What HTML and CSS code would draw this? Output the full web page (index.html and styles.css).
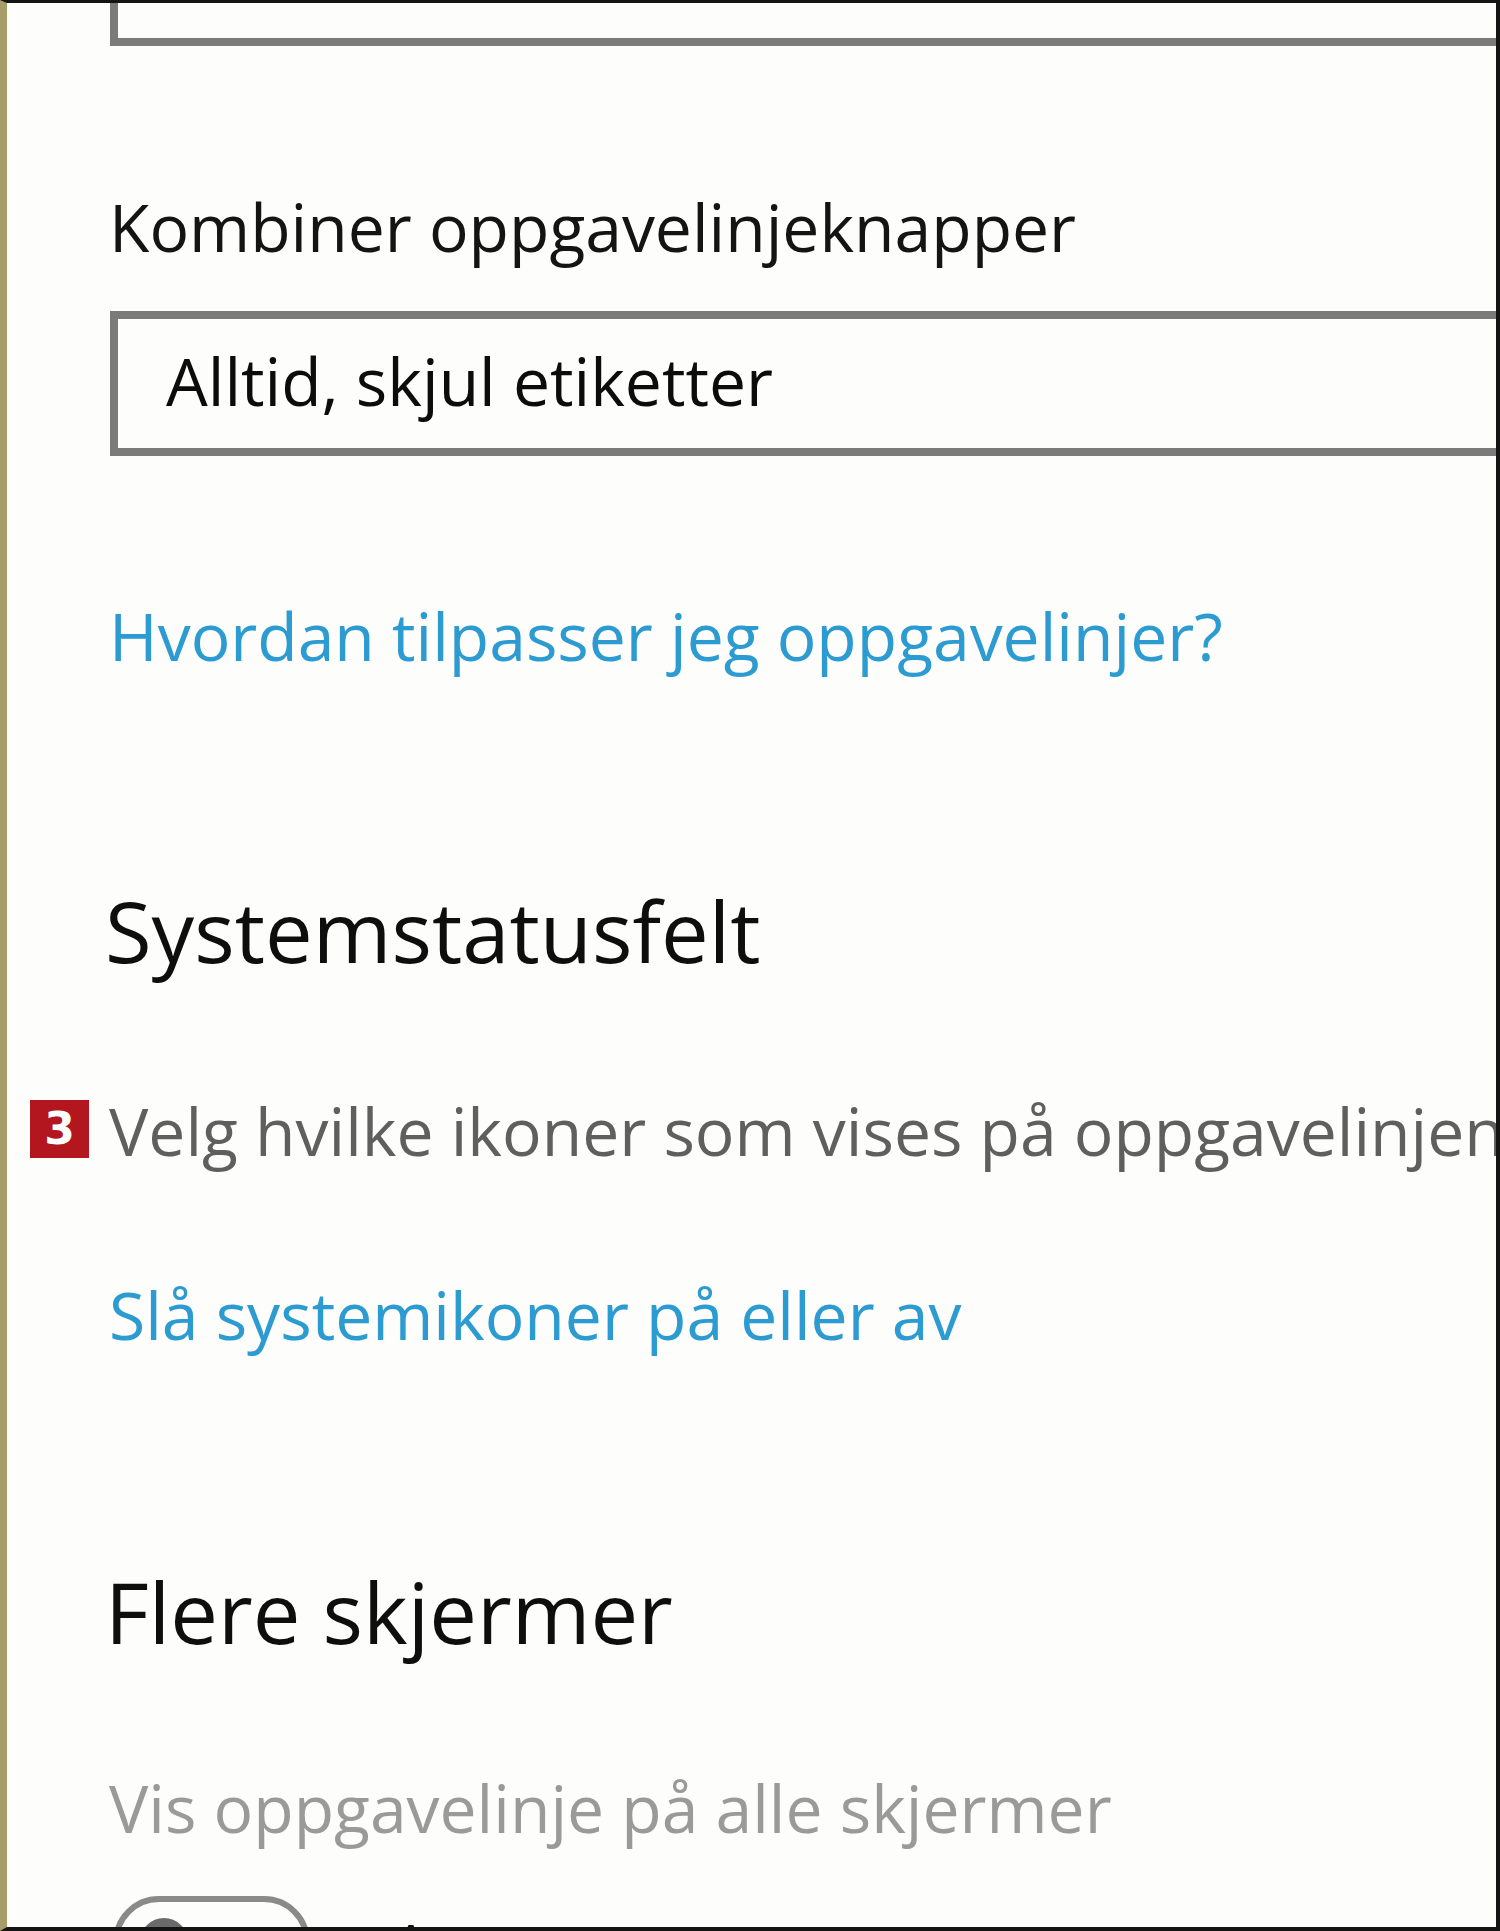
FILE: index.html
```html
<!DOCTYPE html>
<html lang="nb">
<head>
  <meta charset="UTF-8" />
  <title>Oppgavelinje</title>
  <link rel="stylesheet" href="styles.css">
</head>
<body>

<div class="window">
  <div class="page">

    <!-- previous dropdown, scrolled out of view -->
    <div class="dropdown dropdown-cut"></div>

    <div class="field-label">Kombiner oppgavelinjeknapper</div>
    <div class="dropdown">Alltid, skjul etiketter</div>

    <a class="link help-link" href="#">Hvordan tilpasser jeg oppgavelinjer?</a>

    <h2 class="section-title tray-title">Systemstatusfelt</h2>

    <div class="annotated">
      <span class="badge">3</span>
      <a class="muted-link" href="#">Velg hvilke ikoner som vises på oppgavelinjen</a>
    </div>

    <a class="link icons-link" href="#">Slå systemikoner på eller av</a>

    <h2 class="section-title screens-title">Flere skjermer</h2>

    <div class="setting-label">Vis oppgavelinje på alle skjermer</div>

    <div class="toggle-row">
      <span class="toggle"><span class="knob"></span></span>
      <span class="toggle-state">Av</span>
    </div>

  </div>
</div>

</body>
</html>
```

FILE: styles.css
```css
html, body {
  margin: 0;
  padding: 0;
}
body {
  background: #fdfdfb;
  font-family: 'Open Sans', 'Noto Sans', sans-serif;
  color: #111;
}
.window {
  width: 1500px;
  height: 1931px;
  box-sizing: border-box;
  border-top: 3px solid #141414;
  border-right: 4px solid #141414;
  border-bottom: 4px solid #141414;
  border-left: 7px solid #a89d68;
  background: #fdfdfb;
  overflow: hidden;
}
.page {
  padding-left: 102px;
  font-size: 66px;
  line-height: 80px;
}

/* dropdowns */
.dropdown {
  margin-left: 1px;
  width: 1500px;
  border: 8px solid #7b7b7b;
  padding: 21px 0 28px 48px;
  height: 80px;
  color: #0c0c0c;
}
.dropdown-cut {
  border-top: none;
  height: 35px;
  padding: 0;
}

.field-label {
  margin-top: 140px;
  margin-bottom: 45px;
  color: #141414;
}

/* links */
.link {
  display: block;
  color: #2b9bd1;
  text-decoration: none;
  white-space: nowrap;
}
.help-link {
  margin-top: 139px;
}
.icons-link {
  margin-top: 104px;
}

.section-title {
  margin: 0 0 0 -4px;
  font-size: 85px;
  line-height: 100px;
  font-weight: normal;
  color: #0e0e0e;
}
.tray-title {
  margin-top: 205px;
}
.screens-title {
  margin-top: 207px;
}

/* annotated row with the red marker */
.annotated {
  position: relative;
  margin-top: 110px;
  white-space: nowrap;
}
.muted-link {
  color: #5f5f5f;
  text-decoration: none;
}
.badge {
  position: absolute;
  left: -79px;
  top: 10px;
  width: 59px;
  height: 58px;
  background: #b3161e;
  color: #fff;
  font-family: 'DejaVu Sans', sans-serif;
  font-weight: bold;
  font-size: 44px;
  line-height: 58px;
  text-align: center;
}

.setting-label {
  margin-top: 106px;
  color: #9a9a9a;
}

/* toggle switch, cut off by the window */
.toggle-row {
  display: flex;
  align-items: flex-start;
  gap: 80px;
  margin-top: 49px;
}
.toggle {
  display: block;
  margin-left: 4px;
  width: 185px;
  height: 80px;
  border: 6px solid #8a8a8a;
  border-radius: 46px;
  position: relative;
}
.knob {
  position: absolute;
  left: 21px;
  top: 16px;
  width: 48px;
  height: 48px;
  border-radius: 50%;
  background: #6a6a6a;
}
.toggle-state {
  margin-top: 10px;
  color: #111;
}
```
